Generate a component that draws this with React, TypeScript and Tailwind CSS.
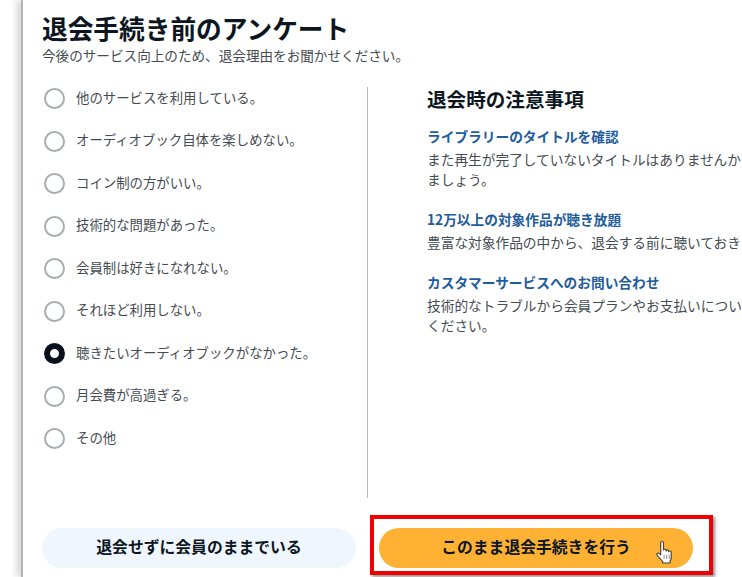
const reasons = [
  "他のサービスを利用している。",
  "オーディオブック自体を楽しめない。",
  "コイン制の方がいい。",
  "技術的な問題があった。",
  "会員制は好きになれない。",
  "それほど利用しない。",
  "聴きたいオーディオブックがなかった。",
  "月会費が高過ぎる。",
  "その他",
];

const notes = [
  {
    title: "ライブラリーのタイトルを確認",
    lines: ["また再生が完了していないタイトルはありませんか？退会前に確認し", "ましょう。"],
  },
  {
    title: "12万以上の対象作品が聴き放題",
    lines: ["豊富な対象作品の中から、退会する前に聴いておきましょう。"],
  },
  {
    title: "カスタマーサービスへのお問い合わせ",
    lines: ["技術的なトラブルから会員プランやお支払いについてまでお問い合わせ", "ください。"],
  },
];

const HandCursor = () => (
  <svg
    width="17"
    height="23"
    viewBox="1 0.5 14.5 22.5"
    preserveAspectRatio="none"
    className="absolute left-[656px] top-[541px]"
  >
    <path
      d="M5 2.2c0-1.5 2.4-1.5 2.4 0v7.2c0-1.2 2.2-1.2 2.2 0v.8c0-1.2 2.2-1.2 2.2 0v.8c0-1.1 2.2-1.1 2.2.2v5.6c0 1.6-.5 2.6-1 3.6v1.6H6.6v-1.4L2 14.4c-1-1.3.6-2.8 1.8-1.6L5 14z"
      fill="#fff"
      stroke="#444"
      strokeWidth="1"
      strokeLinejoin="round"
    />
    <path d="M7.9 14v4M10.1 14v4M12.3 14v4" stroke="#777" strokeWidth="0.8" />
  </svg>
);

export default function App() {
  return (
    <div
      className="relative h-[577px] w-[742px] overflow-hidden bg-white"
      style={{ fontFamily: '"Noto Sans CJK JP", "Noto Sans", sans-serif' }}
    >
      <div className="ml-[21px] h-full border-l-2 border-[#b4b4b4] pl-[19px] shadow-[-5px_0_6px_rgba(0,0,0,0.14)]">
        <h1 className="pt-[11px] text-[25.7px] leading-[34px] font-bold text-[#0c1620]">退会手続き前のアンケート</h1>
        <p className="mt-[1px] text-[13.6px] leading-[18px] text-[#444b52]">
          今後のサービス向上のため、退会理由をお聞かせください。
        </p>

        <div className="mt-[23px] flex h-[411px]">
          <div className="flex w-[325px] shrink-0 flex-col gap-[21.5px] pt-[1px] pl-[2px]">
            {reasons.map((reason, i) =>
              <label key={reason} className="flex h-[21px] items-center gap-[11px]">
                {i === 6 ? (
                  <span className="h-[21px] w-[21px] shrink-0 rounded-full border-[6px] border-[#06111c] bg-white" />
                ) : (
                  <span className="h-[21px] w-[21px] shrink-0 rounded-full border-2 border-[#a9adb1] bg-white" />
                )}
                <span className="pb-[4px] text-[13.4px] leading-[20px] text-[#444b52]">{reason}</span>
              </label>
            )}
          </div>
          <div className="w-px shrink-0 bg-[#b4b8bb]" />
          <div className="ml-[59px] w-[400px] shrink-0 whitespace-nowrap">
            <h2 className="-mt-[1px] text-[19.6px] leading-[26px] font-bold text-[#0c1620]">退会時の注意事項</h2>
            <div className="mt-[14px] flex flex-col gap-[20px]">
              {notes.map((note) => (
                <div key={note.title}>
                  <h3 className="text-[13.7px] leading-[20px] font-bold text-[#1e5c9b]">{note.title}</h3>
                  <div className="mt-[3px] text-[13.7px] leading-[20px] text-[#444b52]">
                    {note.lines.map((line) => (
                      <p key={line}>{line}</p>
                    ))}
                  </div>
                </div>
              ))}
            </div>
          </div>
        </div>

        <div className="mt-[30px] flex gap-[23px]">
          <button className="h-10 w-[314px] rounded-[20px] bg-[#eff6fe] pb-[2px] text-[15.8px] font-bold text-[#0c1620]">
            退会せずに会員のままでいる
          </button>
          <button className="h-10 w-[314px] rounded-[20px] bg-[#ffb133] pb-[2px] text-[15.8px] font-bold text-[#0c1620]">
            このまま退会手続きを行う
          </button>
        </div>
      </div>

      <div className="absolute left-[370px] top-[515px] h-[60px] w-[343px] border-[4px] border-[#f00000] shadow-[2px_2px_3px_rgba(0,0,0,0.45)]" />
      <HandCursor />
    </div>
  );
}
